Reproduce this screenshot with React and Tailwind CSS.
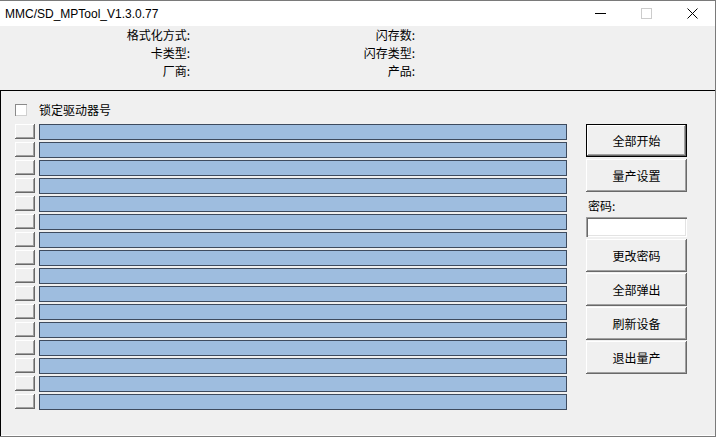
import React from "react";

const cjk = { fontFamily: '"Noto Sans CJK SC", "Noto Sans", sans-serif' };

function WinButton({ children, isDefault }) {
  return (
    <div
      className={
        "flex h-[33px] w-[101px] items-center justify-center bg-[#f0f0f0] text-[12px] leading-none text-black " +
        (isDefault
          ? "shadow-[inset_-1px_-1px_#000,inset_1px_1px_#000,inset_-2px_-2px_#696969,inset_2px_2px_#fff,inset_-3px_-3px_#a0a0a0]"
          : "shadow-[inset_-1px_-1px_#696969,inset_1px_1px_#fff,inset_-2px_-2px_#a0a0a0,inset_2px_2px_#f0f0f0]")
      }
      style={cjk}
    >
      {children}
    </div>
  );
}

function Row() {
  return (
    <div className="flex h-[18px] items-start gap-[4px]">
      <div className="h-[15px] w-[20px] bg-[#f0f0f0] shadow-[inset_-1px_-1px_#696969,inset_1px_1px_#fff,inset_-2px_-2px_#a0a0a0]" />
      <div className="h-[16px] w-[528px] border border-[#3e4b5e] bg-[#9ebddf]" />
    </div>
  );
}

export default function App() {
  const rows = Array.from({ length: 16 });
  return (
    <div className="flex h-[437px] w-[716px] flex-col overflow-hidden border-t border-r border-b border-[#7a7a7a] bg-[#f0f0f0]">
      {/* title bar */}
      <div className="flex h-[25px] shrink-0 items-center bg-white">
        <div
          className="flex-1 pl-[5px] text-[12px] text-black"
          style={{ fontFamily: '"Liberation Sans", Arial, sans-serif' }}
        >
          MMC/SD_MPTool_V1.3.0.77
        </div>
        <div className="flex h-full">
          <div className="flex h-full w-[46px] items-center justify-center">
            <svg width="11" height="11" viewBox="0 0 11 11">
              <line x1="0" y1="5.5" x2="11" y2="5.5" stroke="#000" strokeWidth="1" />
            </svg>
          </div>
          <div className="flex h-full w-[46px] items-center justify-center">
            <svg width="11" height="11" viewBox="0 0 11 11">
              <rect x="0.5" y="0.5" width="10" height="10" fill="none" stroke="#cccccc" strokeWidth="1" />
            </svg>
          </div>
          <div className="flex h-full w-[46px] items-center justify-center">
            <svg width="11" height="11" viewBox="0 0 11 11">
              <path d="M0.5 0.5 L10.5 10.5 M10.5 0.5 L0.5 10.5" stroke="#000" strokeWidth="1" />
            </svg>
          </div>
        </div>
      </div>

      {/* info area */}
      <div className="flex h-[64px] shrink-0 text-[12px] leading-[18px] text-black" style={cjk}>
        <div className="flex w-[190px] flex-col items-end">
          <div>格式化方式:</div>
          <div>卡类型:</div>
          <div>厂商:</div>
        </div>
        <div className="flex w-[225px] flex-col items-end">
          <div>闪存数:</div>
          <div>闪存类型:</div>
          <div>产品:</div>
        </div>
      </div>

      {/* lower panel */}
      <div className="flex flex-1 border-t border-l border-black shadow-[inset_0_-1px_#fff]">
        <div className="flex flex-col pl-[14px] pt-[9px]">
          <div className="flex h-[20px] items-center gap-[12px]">
            <div className="h-[12px] w-[12px] bg-white shadow-[inset_1px_1px_#8a8a8a,inset_-1px_-1px_#d0d0d0]" />
            <div className="text-[12px] leading-none text-black" style={cjk}>
              锁定驱动器号
            </div>
          </div>
          <div className="mt-[4px] flex flex-col">
            {rows.map((_, i) => (
              <Row key={i} />
            ))}
          </div>
        </div>
        <div className="ml-[19px] flex flex-col pt-[33px]">
          <WinButton isDefault>全部开始</WinButton>
          <div className="mt-[2px]">
            <WinButton>量产设置</WinButton>
          </div>
          <div className="mt-[7px] pl-[2px] text-[12px] leading-[14px] text-black" style={cjk}>
            密码:
          </div>
          <div className="mt-[4px] h-[20px] w-[101px] bg-white shadow-[inset_1px_1px_#a0a0a0,inset_2px_2px_#696969,inset_-1px_-1px_#fff,inset_-2px_-2px_#e3e3e3]" />
          <div className="mt-[2px] flex flex-col gap-[1px]">
            <WinButton>更改密码</WinButton>
            <WinButton>全部弹出</WinButton>
            <WinButton>刷新设备</WinButton>
            <WinButton>退出量产</WinButton>
          </div>
        </div>
      </div>
    </div>
  );
}
